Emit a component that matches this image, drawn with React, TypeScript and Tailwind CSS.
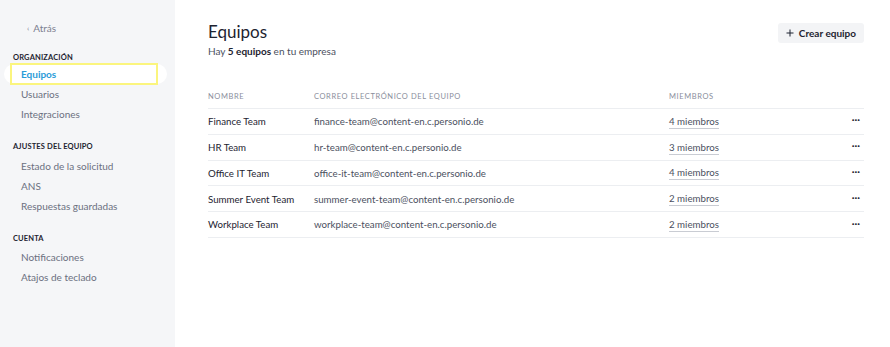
import React from 'react';

const teams = [
  { name: 'Finance Team', email: 'finance-team@content-en.c.personio.de', members: 4 },
  { name: 'HR Team', email: 'hr-team@content-en.c.personio.de', members: 3 },
  { name: 'Office IT Team', email: 'office-it-team@content-en.c.personio.de', members: 4 },
  { name: 'Summer Event Team', email: 'summer-event-team@content-en.c.personio.de', members: 2 },
  { name: 'Workplace Team', email: 'workplace-team@content-en.c.personio.de', members: 2 },
];

const SectionTitle = ({ children }: { children: React.ReactNode }) => (
  <div className="px-[13px] text-[7.5px] font-bold tracking-[0.02em] text-[#1d2330] h-[14px] leading-[14px]">{children}</div>
);

const NavItem = ({ label, active }: { label: string; active?: boolean }) => (
  <div className="relative h-[20px]">
    {active ? (
      <div className="absolute left-[4px] right-[8px] inset-y-0 rounded-full bg-white">
        <div className="absolute left-[6px] right-[9px] -top-[1px] -bottom-[1px] border-2 border-[#fbf57e]" />
      </div>
    ) : null}
    <div className={`relative pl-[21px] leading-[20px] text-[10px] ${active ? 'text-[#2b9cd8] font-bold' : 'text-[#6b7080]'}`}>{label}</div>
  </div>
);

export default function App() {
  return (
    <div className="flex w-[890px] h-[347px] bg-white" style={{ fontFamily: 'Lato, "Open Sans", sans-serif' }}>
      <aside className="w-[175px] shrink-0 bg-[#f5f6f8] pt-[21px]">
        <div className="pl-[27px] text-[10px] text-[#7c8090] h-[14px] leading-[14px] flex items-center gap-[4px]">
          <span className="text-[8px]">‹</span>
          <span>Atrás</span>
        </div>
        <div className="mt-[16px]">
          <SectionTitle>ORGANIZACIÓN</SectionTitle>
          <div className="-mt-[1px]">
            <NavItem label="Equipos" active />
            <NavItem label="Usuarios" />
            <NavItem label="Integraciones" />
          </div>
        </div>
        <div className="mt-[16px]">
          <SectionTitle>AJUSTES DEL EQUIPO</SectionTitle>
          <div className="mt-[2px]">
            <NavItem label="Estado de la solicitud" />
            <NavItem label="ANS" />
            <NavItem label="Respuestas guardadas" />
          </div>
        </div>
        <div className="mt-[16px]">
          <SectionTitle>CUENTA</SectionTitle>
          <div className="mt-[1px]">
            <NavItem label="Notificaciones" />
            <NavItem label="Atajos de teclado" />
          </div>
        </div>
      </aside>
      <main className="flex-1 pl-[33px] pr-[26px] pt-[20px]">
        <div className="flex items-start justify-between">
          <div>
            <h1 className="text-[17px] text-[#1d2330] leading-[24px]">Equipos</h1>
            <p className="text-[10px] text-[#4b5060]">
              Hay <span className="font-bold text-[#1d2330]">5 equipos</span> en tu empresa
            </p>
          </div>
          <button className="mt-[3px] h-[20px] px-[8px] rounded-[3px] bg-[#f3f4f6] flex items-center gap-[5px] text-[10px] font-bold text-[#1d2330]">
            <svg width="8" height="8" viewBox="0 0 8 8" fill="none" stroke="#1d2330" strokeWidth="1">
              <path d="M4 0.5v7M0.5 4h7" />
            </svg>
            Crear equipo
          </button>
        </div>
        <div className="mt-[26px] flex text-[7.5px] tracking-[0.08em] text-[#8a8e9c] h-[24px] items-center border-b border-[#eceef1]">
          <div className="w-[106px]">NOMBRE</div>
          <div className="w-[355px]">CORREO ELECTRÓNICO DEL EQUIPO</div>
          <div className="flex-1">MIEMBROS</div>
        </div>
        {teams.map((t) => (
          <div key={t.name} className="flex items-center h-[25.8px] border-b border-[#eceef1] text-[9.7px]">
            <div className="w-[106px] text-[#1d2330]">{t.name}</div>
            <div className="w-[355px] text-[#4b5060]">{t.email}</div>
            <div className="flex-1">
              <span className="text-[#4b5060] border-b border-[#c9ccd3] leading-[12px] pb-[1px] inline-block">{t.members} miembros</span>
            </div>
            <div className="w-[16px] flex justify-end pr-[4px] text-[#1d2330] font-bold text-[10px] leading-none -mt-[4px]">···</div>
          </div>
        ))}
      </main>
    </div>
  );
}
